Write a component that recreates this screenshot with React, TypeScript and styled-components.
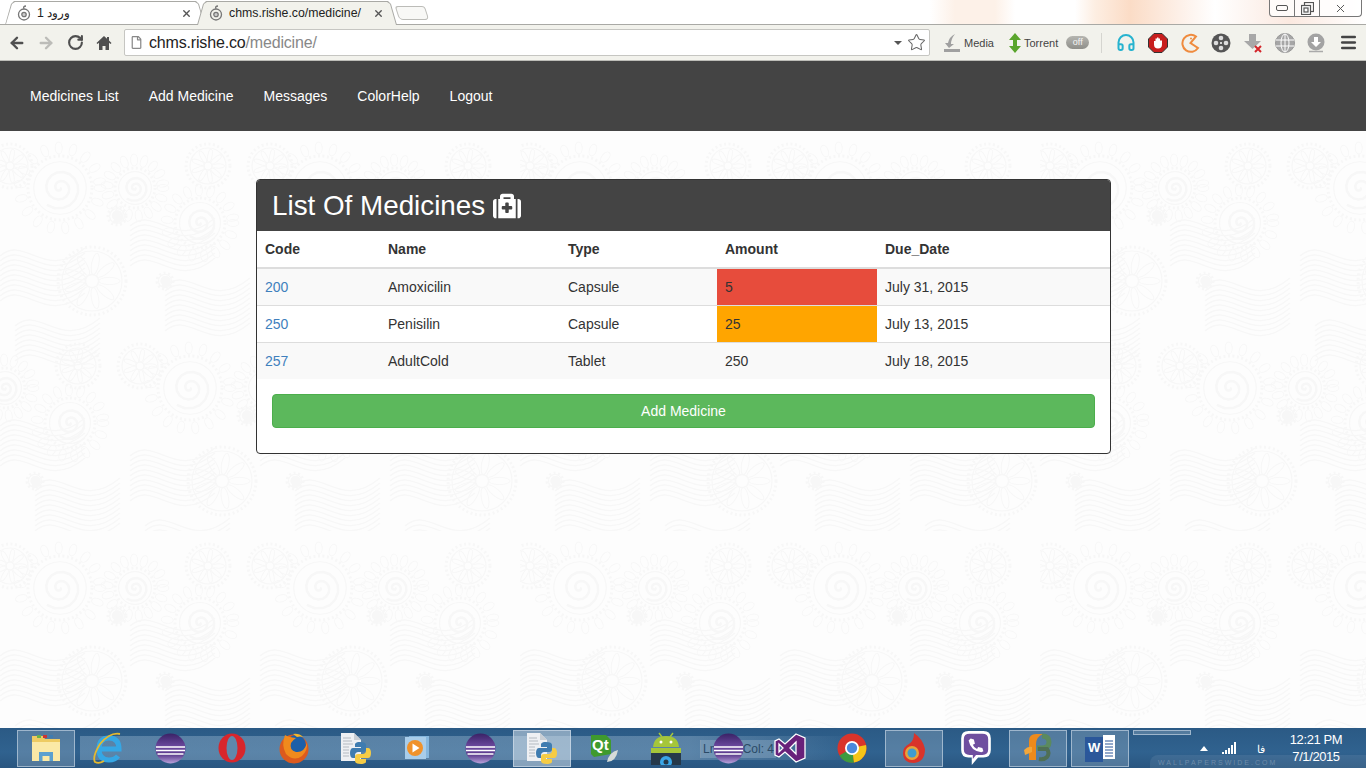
import React from 'react';
import styled, { createGlobalStyle, css } from 'styled-components';
import { FaMedkit, FaRegFile } from 'react-icons/fa';
import { ArrowLeft, ArrowRight, RotateCw, Star, X, Menu, Headphones } from 'lucide-react';

// paisley wallpaper, one half of the tile is repeated with an offset
const buildPattern = () => {
    const W = 520;
    const H = 400;
    const petalRing = (x: number, y: number, r: number, len: number, width: number, step: number) => {
        let out = '';
        for (let a = 0; a < 6.28; a += step) {
            const px = (x + Math.cos(a) * (r + len)).toFixed(1);
            const py = (y + Math.sin(a) * (r + len)).toFixed(1);
            out += `<ellipse cx="${px}" cy="${py}" rx="${width}" ry="${len}" transform="rotate(${((a * 180) / 3.14 + 90).toFixed(0)} ${px} ${py})"/>`;
        }
        return out;
    };
    const spiral = (x: number, y: number, r: number, petals = true) => {
        let d = `M${x} ${y}`;
        for (let a = 0; a < 15; a += 0.4) {
            const k = (a / 15) * r * 0.68;
            d += `L${(x + Math.cos(a) * k).toFixed(1)} ${(y + Math.sin(a) * k).toFixed(1)}`;
        }
        return `<path d="${d}" stroke-width="2.500"/><circle cx="${x}" cy="${y}" r="${r * 0.82}" stroke-width="1.200"/><circle cx="${x}" cy="${y}" r="${r}" stroke-width="3" stroke-dasharray="2 2.500"/>${petals ? petalRing(x, y, r + 2, 6, 3.500, 0.36) : ''}`;
    };
    const flower = (x: number, y: number, r: number) =>
        `<circle cx="${x}" cy="${y}" r="${r * 0.22}" stroke-width="1.500"/>${petalRing(x, y, r * 0.22, r * 0.36, r * 0.12, 0.7)}<circle cx="${x}" cy="${y}" r="${r}" stroke-width="1.200"/><circle cx="${x}" cy="${y}" r="${r + 4}" stroke-width="3" stroke-dasharray="2 2.500"/>`;
    const waves = (x: number, y: number, n: number) => {
        let out = '';
        for (let i = 0; i < n; i++) {
            out += `<path d="M${x} ${y + i * 5}c25 -22 45 26 85 -8" stroke-width="1.300"/>`;
        }
        return out;
    };
    const group = [
        spiral(60, 62, 32),
        spiral(135, 62, 20),
        spiral(200, 97, 25),
        flower(208, 40, 18),
        flower(10, 40, 18),
        flower(92, 155, 30),
        spiral(117, 90, 9, false),
        spiral(165, 155, 8, false),
        waves(130, 100, 9),
        waves(165, 160, 10),
        waves(0, 130, 10),
        waves(15, 200, 8),
    ].join('');
    const copies = [[0, 0], [260, 0], [-130, 200], [130, 200], [390, 200], [0, 400], [260, 400]];
    const body = copies.map(([dx, dy]) => `<g transform="translate(${dx} ${dy - 5})">${group}</g>`).join('');
    const svg = `<svg xmlns="http://www.w3.org/2000/svg" width="${W}" height="${H}"><g fill="none" stroke="#f7f7f7">${body}</g></svg>`;
    return `data:image/svg+xml,${encodeURIComponent(svg)}`;
};

const patternUrl = buildPattern();

const GlobalStyle = createGlobalStyle`
  html, body { margin: 0; padding: 0; height: 100%; overflow: hidden; }
  body { font-family: "Liberation Sans", Arial, sans-serif; font-size: 14px; color: #333; }
  #root { height: 100%; }
  * { box-sizing: border-box; }
`;

const Screen = styled.div`
  display: flex;
  flex-direction: column;
  width: 1366px;
  height: 768px;
  overflow: hidden;
`;

const TabStrip = styled.div`
  display: flex;
  align-items: flex-end;
  height: 25px;
  padding-left: 13px;
  gap: 11px;
  border-bottom: 1px solid #a9a9a5;
  background: linear-gradient(90deg, #fff 0, #fff 930px, #fdf1e8 955px, #fdf1e8 995px, #fff 1015px, #fff 1075px, #fdeee2 1095px, #fbdcc6 1130px, #fdf0e8 1180px, #fff 1215px, #fbe9e0 1290px, #fff 1366px);
`;

const Tab = styled.div<{ $active?: boolean }>`
  position: relative;
  display: flex;
  align-items: center;
  width: 181px;
  height: 24px;
  margin-bottom: -1px;
  padding: 0 2px 0 4px;
  font-size: 12.3px;
  color: #222;
  z-index: ${p => (p.$active ? 2 : 1)};
  &::before {
    content: '';
    position: absolute;
    inset: 0 -11px 0 -8px;
    clip-path: polygon(0 100%, 6px 3px, 9px 0, calc(100% - 9px) 0, calc(100% - 6px) 3px, 100% 100%);
    background: #a9a9a5;
  }
  &::after {
    content: '';
    position: absolute;
    inset: 1px -10px ${p => (p.$active ? '0' : '1px')} -7px;
    clip-path: polygon(0 100%, 6px 2px, 9px 0, calc(100% - 9px) 0, calc(100% - 6px) 2px, 100% 100%);
    background: ${p => (p.$active ? '#f2f2ec' : '#fff')};
  }
  & > * { position: relative; z-index: 1; }
`;

const TabTitle = styled.span`
  flex: 1;
  margin-left: 6px;
  white-space: nowrap;
`;

const NewTab = styled.div`
  width: 30px;
  height: 14px;
  margin: 0 0 4px 0;
  border: 1px solid #bcbcb8;
  border-radius: 3px 3px 4px 4px;
  background: #f8f8f6;
  transform: skewX(18deg);
  position: relative;
  z-index: 3;
`;

const WindowButtons = styled.div`
  position: absolute;
  top: 0;
  left: 1269px;
  display: flex;
  width: 93px;
  height: 17px;
  border: 1px solid #777;
  border-top: 0;
  border-radius: 0 0 4px 4px;
  background: rgba(255, 255, 255, 0.8);
`;

const WindowButton = styled.div<{ $width: number; $last?: boolean }>`
  display: flex;
  align-items: center;
  justify-content: center;
  width: ${p => p.$width}px;
  color: #555;
  border-right: ${p => (p.$last ? '0' : '1px solid #777')};
`;

const Toolbar = styled.div`
  display: flex;
  align-items: center;
  height: 36px;
  padding-left: 8px;
  background: #f2f2ec;
  border-bottom: 1px solid #bdbdb8;
`;

const NavButton = styled.div<{ $color?: string }>`
  display: flex;
  align-items: center;
  justify-content: center;
  flex: none;
  width: 18px;
  height: 18px;
  margin-right: 11px;
  color: ${p => p.$color || '#4f4f4f'};
`;

const Omnibox = styled.div`
  display: flex;
  align-items: center;
  flex: none;
  width: 806px;
  height: 27px;
  padding: 0 3px 0 5px;
  background: #fff;
  border: 1px solid #c6c6c2;
  border-radius: 2px;
  font-size: 16px;
  color: #222;
`;

const UrlRest = styled.span`
  color: #888;
`;

const UrlText = styled.div`
  flex: 1;
  margin-left: 6px;
  letter-spacing: -0.17px;
`;

const DropCaret = styled.span`
  width: 0;
  height: 0;
  margin-right: 5px;
  border: 4px solid transparent;
  border-top: 4px solid #555;
  border-bottom: 0;
`;

const Extensions = styled.div`
  display: flex;
  align-items: center;
  flex: 1;
  height: 100%;
  padding-left: 13px;
  font-size: 11px;
  color: #444;
`;

const ExtLabel = styled.span`
  display: flex;
  align-items: center;
  flex: none;
  gap: 3px;
  margin-right: 15px;
`;

const OffPill = styled.span`
  flex: none;
  width: 23px;
  height: 13px;
  margin-left: -7px;
  border-radius: 7px;
  background: linear-gradient(#b5b5b0, #8f8f8a);
  color: #f4f4f4;
  font-size: 9px;
  line-height: 12px;
  text-align: center;
`;

const ExtDivider = styled.span`
  flex: none;
  width: 1px;
  height: 20px;
  margin: 0 14px 0 12px;
  background: #d5d5d0;
`;

const ExtSlot = styled.span`
  display: flex;
  align-items: center;
  justify-content: center;
  flex: none;
  width: 20px;
  height: 20px;
  margin-right: 11.7px;
`;

const NavBar = styled.nav`
  display: flex;
  align-items: center;
  height: 70px;
  padding-left: 15px;
  background: #444;
`;

const NavLink = styled.a`
  padding: 0 15px;
  font-size: 14px;
  color: #fff;
  text-decoration: none;
`;

const Main = styled.main`
  flex: 1;
  padding-top: 48px;
  background-color: #fdfdfd;
  background-image: url("${patternUrl}");
`;

const Panel = styled.section`
  width: 855px;
  margin-left: 256px;
  padding-bottom: 25px;
  background: #fff;
  border: 1px solid #333;
  border-radius: 4px;
`;

const PanelHeader = styled.h3`
  display: flex;
  align-items: center;
  gap: 8px;
  height: 51px;
  margin: 0;
  padding-left: 15px;
  background: #444;
  border-radius: 3px 3px 0 0;
  color: #fff;
  font-size: 27.800px;
  font-weight: 400;
`;

const Table = styled.table`
  width: 853px;
  table-layout: fixed;
  border-collapse: collapse;
  border-spacing: 0;
`;

const HeadCell = styled.th`
  height: 37px;
  padding: 0 8px;
  text-align: left;
  font-size: 14px;
  font-weight: 700;
  border-bottom: 2px solid #ddd;
`;

const Row = styled.tr<{ $striped?: boolean }>`
  background: ${p => (p.$striped ? '#f9f9f9' : '#fff')};
`;

const Cell = styled.td<{ $fill?: string; $bordered?: boolean }>`
  height: 37px;
  padding: 0 8px;
  font-size: 14px;
  color: #333;
  ${p => p.$fill && css`background: ${p.$fill};`}
  ${p => p.$bordered && css`border-top: 1px solid #ddd;`}
`;

const CodeLink = styled.a`
  color: #3f80bd;
  text-decoration: none;
`;

const AddButton = styled.button`
  display: block;
  width: 823px;
  height: 34px;
  margin: 15px 0 0 15px;
  background: #5cb85c;
  border: 1px solid #4cae4c;
  border-radius: 4px;
  color: #fff;
  font-family: inherit;
  font-size: 14px;
`;

const Taskbar = styled.footer`
  position: relative;
  display: flex;
  align-items: center;
  height: 40px;
  padding-left: 15px;
  overflow: hidden;
  background:
    linear-gradient(90deg, transparent 0, transparent 80px, rgba(150, 180, 205, 0.42) 80px, rgba(150, 180, 205, 0.42) 690px, rgba(150, 180, 205, 0.2) 780px, transparent 860px) 0 8px / 100% 24px no-repeat,
    linear-gradient(#2b5a85, #30628f 60%, #2a5680);
`;

const Slot = styled.div<{ $state?: 'running' | 'active' | 'partial' }>`
  position: relative;
  display: flex;
  align-items: center;
  justify-content: center;
  flex: none;
  width: 62px;
  height: 40px;
  &::before {
    content: '';
    display: ${p => (p.$state ? 'block' : 'none')};
    position: absolute;
    left: 2px;
    right: 2px;
    top: 2px;
    bottom: ${p => (p.$state === 'partial' ? '33px' : '1px')};
    border: 1px solid rgba(220, 232, 242, 0.55);
    background: ${p => (p.$state === 'active' ? 'rgba(225, 235, 243, 0.5)' : 'rgba(200, 215, 228, 0.25)')};
  }
  & > svg { position: relative; }
`;

const GhostText = styled.div`
  position: absolute;
  left: 700px;
  top: 12px;
  display: flex;
  justify-content: space-between;
  width: 76px;
  height: 18px;
  padding: 0 2px;
  border-left: 1px solid #7e99b1;
  font-size: 12px;
  line-height: 18px;
  color: #2b4a66;
  background: rgba(200, 215, 228, 0.25);
  white-space: nowrap;
`;

const Watermark = styled.span`
  position: absolute;
  left: 1150px;
  right: 0;
  bottom: 0;
  height: 13px;
  padding-left: 8px;
  border-radius: 8px 0 0 0;
  background: rgba(255, 255, 255, 0.08);
  color: rgba(255, 255, 255, 0.25);
  font-size: 7px;
  line-height: 15px;
  letter-spacing: 2px;
  white-space: nowrap;
`;

const Tray = styled.div`
  position: absolute;
  left: 1200px;
  top: 0;
  display: flex;
  align-items: center;
  height: 40px;
  color: #fff;
  font-size: 11px;
`;

const TraySignal = styled.svg`
  margin-left: 14px;
`;

const TrayLang = styled.span`
  margin: 0 0 0 21px;
  font-family: "Noto Sans", sans-serif;
  font-size: 11px;
`;

const Clock = styled.div`
  width: 60px;
  margin-left: 21px;
  font-size: 13px;
  letter-spacing: -0.4px;
  line-height: 17px;
  text-align: center;
`;

const Favicon = () => (
    <svg width="14" height="16" viewBox="0 0 14 16" fill="none" stroke="#777" strokeWidth="1.3">
        <circle cx="7" cy="9.5" r="5.5" />
        <circle cx="7" cy="9.5" r="2.2" fill="#ccc" />
        <path d="M7 4C6 2 7 1 9 1" />
    </svg>
);

const HomeIcon = () => (
    <svg width="16" height="16" viewBox="0 0 16 16" fill="#4f4f4f">
        <path d="M8 1 0.5 8l1 1L3 7.8V15h3.5v-4h3v4H13V7.8L14.5 9l1-1L13 5.6V2h-2v1.8z" />
    </svg>
);

const ExtIcons: React.ReactNode[] = [
    <Headphones key="h" size={21} color="#27b3cf" strokeWidth={2.4} />,
    <svg key="s" width="20" height="20" viewBox="0 0 20 20">
        <path d="M6 .5h8L19.500 6v8L14 19.500H6L.5 14V6z" fill="#c81e1e" stroke="#333" />
        <path d="M6 8h1.500V5.500H9V4.500h1.500v1H12v2h2v4q0 4-4 4t-4-4z" fill="#fff" />
    </svg>,
    <svg key="p" width="20" height="20" viewBox="0 0 20 20" fill="none" stroke="#ef8b3e" strokeWidth="2">
        <path d="M16 3.500A8.500 8.500 0 1 0 18 15L10.500 10z" />
        <circle cx="11" cy="5.500" r="1" fill="#ef8b3e" stroke="none" />
    </svg>,
    <svg key="f" width="20" height="20" viewBox="0 0 20 20">
        <circle cx="10" cy="10" r="9.500" fill="#555" />
        <g fill="#ddd">
            <circle cx="10" cy="5" r="2.300" /><circle cx="10" cy="15" r="2.300" />
            <circle cx="5" cy="10" r="2.300" /><circle cx="15" cy="10" r="2.300" />
        </g>
        <circle cx="10" cy="10" r="1" fill="#fff" />
    </svg>,
    <svg key="d" width="20" height="20" viewBox="0 0 20 20">
        <path d="M6 1h7v7h5l-8.500 8L1 8h5z" fill="#a8a8a8" />
        <path d="M12 13l6 6M18 13l-6 6" stroke="#d4252a" strokeWidth="2" />
    </svg>,
    <svg key="g" width="20" height="20" viewBox="0 0 20 20" fill="none" stroke="#fff" strokeWidth="1">
        <circle cx="10" cy="10" r="9.500" fill="#a6a6a6" stroke="#999" />
        <ellipse cx="10" cy="10" rx="4" ry="9" />
        <path d="M1 7h18M1 13h18M10 1v18" />
    </svg>,
    <svg key="o" width="20" height="20" viewBox="0 0 20 20">
        <circle cx="10" cy="9" r="8.500" fill="#a3a3a3" />
        <path d="M8 4h4v5h3l-5 5-5-5h3z" fill="#fff" />
        <path d="M3 18.500h14" stroke="#aaa" strokeWidth="1.500" />
    </svg>,
];

const PythonFile = () => (
    <svg width="32" height="31" viewBox="0 0 32 31">
        <path d="M1 0h13l7 7v21H1z" fill="#eef0f3" />
        <path d="M14 0v7h7z" fill="#c9ced4" />
        <path d="M3 5h8M3 8h9M3 11h10M3 14h6M3 17h6M3 20h6M3 23h6" stroke="#b4b9c2" strokeWidth="1.100" />
        <g transform="translate(10 9)">
            <path d="M10 0C5 0 5 2 5 3v2h6v1H3C1 6 0 8 0 11s1 5 3 5h2v-3c0-2 2-3 3-3h5c2 0 3-1 3-3V3c0-2-2-3-6-3z" fill="#3f7cb0" />
            <path d="M11 22c5 0 5-2 5-3v-2h-6v-1h8c2 0 3-2 3-5s-1-5-3-5h-2v3c0 2-2 3-3 3H8c-2 0-3 1-3 3v4c0 2 2 3 6 3z" fill="#f6cc45" />
        </g>
    </svg>
);

const Eclipse = ({ id }: { id: string }) => (
    <svg width="31" height="31" viewBox="0 0 31 31">
        <defs>
            <linearGradient id={id} x1="0" y1="0" x2="0" y2="1">
                <stop offset="0" stopColor="#3a2266" />
                <stop offset=".45" stopColor="#6d4aa0" />
                <stop offset=".7" stopColor="#5a3a8c" />
                <stop offset="1" stopColor="#b9a3dc" />
            </linearGradient>
        </defs>
        <circle cx="15.500" cy="15.500" r="15" fill={`url(#${id})`} />
        <path d="M1 14h29M1 17.500h29M2.500 21h26" stroke="#fff" strokeWidth="1.300" />
    </svg>
);

const TaskIcons: { icon: React.ReactNode; state?: 'running' | 'active' | 'partial' }[] = [
    {
        state: 'running',
        icon: (
            <svg width="32" height="32" viewBox="0 0 32 32">
                <path d="M2 4h11l2 3h15v22H2z" fill="#eecb62" />
                <path d="M2 10h28v19H2z" fill="#fbe9a6" />
                <path d="M9 20h14v9h-3.500v-5h-7v5H9z" fill="#5ba0cf" />
                <path d="M7 3h4v3H7z" fill="#6bb04a" />
                <path d="M13 3h4v3h-4z" fill="#c33" />
                <path d="M19 3h4v3h-4z" fill="#3f7cb0" />
            </svg>
        ),
    },
    {
        icon: (
            <svg width="31" height="34" viewBox="0 0 31 34" fill="none">
                <path d="M25 25q-3 4-9 4-10 0-10-11T16 7q10 0 10 11H8" stroke="#35a7e5" strokeWidth="5" />
                <path d="M27 3Q17 1 7 13-1 26 2 31q4 2 9-1" stroke="#e5b92f" strokeWidth="1.800" />
            </svg>
        ),
    },
    { icon: <Eclipse id="ec1" /> },
    {
        icon: (
            <svg width="28" height="30" viewBox="0 0 28 30">
                <ellipse cx="14" cy="15" rx="13.500" ry="14.500" fill="#d8262c" />
                <ellipse cx="14" cy="15" rx="5.500" ry="12" fill="#5f88ab" />
            </svg>
        ),
    },
    {
        icon: (
            <svg width="30" height="31" viewBox="0 0 30 31">
                <circle cx="15" cy="16" r="14.500" fill="#dc5a1e" />
                <circle cx="17" cy="12" r="10" fill="#1d5fa8" />
                <path d="M6 2q-4 10 1 19 8 8 16 2 6-6 5-13-3 10-11 9-7-2-5-9 2-3 5-5-8-1-11-3z" fill="#f08a1d" />
                <path d="M14 1q6-1 10 3-3-1-6 0z" fill="#f5b62a" />
            </svg>
        ),
    },
    { icon: <PythonFile /> },
    {
        icon: (
            <svg width="28" height="24" viewBox="0 0 28 24">
                <path d="M5 0h20v22H5z" fill="#86b7de" />
                <path d="M1 1h21v22H1z" fill="#a9cdea" />
                <circle cx="11" cy="12" r="8" fill="#f0922b" />
                <path d="M8.500 7.500l7 4.500-7 4.500z" fill="#fff" />
            </svg>
        ),
    },
    { icon: <Eclipse id="ec2" /> },
    { state: 'active', icon: <PythonFile /> },
    {
        icon: (
            <svg width="30" height="30" viewBox="0 0 30 30">
                <path d="M2 2h15l5 5v14l-17 3-3-3z" fill="#3f9a2e" />
                <text x="3" y="17" fontSize="15" fontWeight="700" fontFamily="Liberation Sans" fill="#fff">Qt</text>
                <path d="M29 17q-9 2-11 12 9 0 11-12z" fill="#d6dcd9" />
            </svg>
        ),
    },
    {
        icon: (
            <svg width="32" height="33" viewBox="0 0 32 33">
                <path d="M9 1l3 4M23 1l-3 4" stroke="#a5c63a" strokeWidth="1.500" />
                <path d="M3 15Q4 4 16 4t13 11z" fill="#a5c63a" />
                <circle cx="11" cy="10" r="1.500" fill="#fff" />
                <circle cx="21" cy="10" r="1.500" fill="#fff" />
                <path d="M1 16h30v5H1z" fill="#a5c63a" />
                <path d="M1 21h30v12H1z" fill="#26394a" />
                <circle cx="16" cy="30" r="6" fill="#3aa7e8" />
                <circle cx="16" cy="30" r="2.500" fill="#26394a" />
            </svg>
        ),
    },
    { icon: <Eclipse id="ec3" /> },
    {
        icon: (
            <svg width="32" height="30" viewBox="0 0 32 30">
                <path d="M22 1l9 4v20l-9 4-11-10-6 5-4-2V8l4-2 6 5zM22 9l-6 6 6 6zM5 11v8l4-4z" fill="#68217a" stroke="#fff" strokeWidth="1.300" />
            </svg>
        ),
    },
    {
        icon: (
            <svg width="30" height="30" viewBox="0 0 30 30">
                <circle cx="15" cy="15" r="14.500" fill="#d9342b" />
                <path d="M15 15L2.500 22.500A14.500 14.500 0 0 0 17 29.500z" fill="#3d9b3f" />
                <path d="M15 15l14-3a14.500 14.500 0 0 1-12 17.500z" fill="#f5c518" />
                <circle cx="15" cy="15" r="7" fill="#fff" />
                <circle cx="15" cy="15" r="5.200" fill="#4a89dc" />
            </svg>
        ),
    },
    {
        state: 'running',
        icon: (
            <svg width="26" height="32" viewBox="0 0 26 32">
                <path d="M13 1q9 6 11 16 0 13-11 14Q2 31 2 21q0-6 6-9 5-3 5-11z" fill="#d9342b" />
                <circle cx="11" cy="21" r="7" fill="#e8a33a" />
                <circle cx="11" cy="21" r="4.500" fill="#3f9ccf" />
            </svg>
        ),
    },
    {
        icon: (
            <svg width="32" height="36" viewBox="0 0 30 34">
                <path d="M8 1h14q7 0 7 7v11q0 7-7 7h-5l-6 7v-7H8q-7 0-7-7V8q0-7 7-7z" fill="#fff" />
                <path d="M9 3.500h12q5.500 0 5.500 5v10q0 5-5.500 5h-6l-3 4v-4H9q-5.500 0-5.500-5v-10q0-5 5.500-5z" fill="#6f4f9f" />
                <path d="M10 8l3 1 1 4-2 1q1 3 4 4l1-2 4 1 1 3-2 1q-10-1-12-11z" fill="#fff" />
            </svg>
        ),
    },
    {
        state: 'running',
        icon: (
            <svg width="32" height="32" viewBox="0 0 30 32" fill="none">
                <path d="M6 28V9q0-7 7-7h7q-7 3-7 10v16z" fill="#ee8a1c" />
                <path d="M19 4q7 0 7 6t-7 6h-5" stroke="#5b8a5f" strokeWidth="5" />
                <path d="M15 17h9q3 4 0 8-3 3-8 2" stroke="#4f6f55" strokeWidth="4" />
                <path d="M1 18q4-4 8-3v5l-7 3z" fill="#f3a63a" />
            </svg>
        ),
    },
    {
        state: 'running',
        icon: (
            <svg width="30" height="28" viewBox="0 0 30 28">
                <path d="M18 1h12v24H18z" fill="#fff" />
                <path d="M20 7h8M20 10h8M20 13h8M20 16h8M20 19h8M20 22h8" stroke="#2b579a" strokeWidth="1.200" />
                <path d="M0 3h18v25H0z" fill="#2b579a" />
                <text x="3" y="18" fontSize="13" fontWeight="700" fontFamily="Liberation Sans" fill="#fff">W</text>
            </svg>
        ),
    },
    {
        state: 'partial',
        icon: null,
    },
];

const medicines = [
    { code: '200', name: 'Amoxicilin', type: 'Capsule', amount: '5', due: 'July 31, 2015', fill: '#e74c3c' },
    { code: '250', name: 'Penisilin', type: 'Capsule', amount: '25', due: 'July 13, 2015', fill: '#ffa500' },
    { code: '257', name: 'AdultCold', type: 'Tablet', amount: '250', due: 'July 18, 2015' },
];

const App: React.FC = () => {
    return (
        <Screen>
            <GlobalStyle />
            <TabStrip>
                <Tab>
                    <Favicon />
                    <TabTitle>ورود 1</TabTitle>
                    <X size={11} strokeWidth={3} color="#555" />
                </Tab>
                <Tab $active>
                    <Favicon />
                    <TabTitle>chms.rishe.co/medicine/</TabTitle>
                    <X size={11} strokeWidth={3} color="#555" />
                </Tab>
                <NewTab />
                <WindowButtons>
                    <WindowButton $width={25}>
                        <svg width="12" height="6" fill="none" stroke="#555"><rect x=".5" y=".5" width="11" height="5" rx="1.500" /></svg>
                    </WindowButton>
                    <WindowButton $width={25}>
                        <svg width="13" height="13" fill="none" stroke="#555" strokeWidth="1.200"><rect x="3.500" y=".5" width="9" height="9" /><rect x=".5" y="3.500" width="9" height="9" fill="#fff" /><rect x="3" y="6" width="4" height="4" /></svg>
                    </WindowButton>
                    <WindowButton $width={41} $last>
                        <X size={13} strokeWidth={1.800} />
                    </WindowButton>
                </WindowButtons>
            </TabStrip>
            <Toolbar>
                <NavButton><ArrowLeft size={18} strokeWidth={3.200} /></NavButton>
                <NavButton $color="#bcbcb8"><ArrowRight size={18} strokeWidth={3.200} /></NavButton>
                <NavButton><RotateCw size={17} strokeWidth={3} /></NavButton>
                <NavButton><HomeIcon /></NavButton>
                <Omnibox>
                    <FaRegFile size={13} color="#888" />
                    <UrlText>chms.rishe.co<UrlRest>/medicine/</UrlRest></UrlText>
                    <DropCaret />
                    <Star size={19} strokeWidth={1.300} color="#666" />
                </Omnibox>
                <Extensions>
                    <ExtLabel>
                        <svg width="18" height="18" viewBox="0 0 18 18">
                            <path d="M12 0Q6 3 5 9H2l4 5 5-4H8q0-5 4-10zM1 15h16v3H1z" fill="#a0a0a0" />
                        </svg>
                        Media
                    </ExtLabel>
                    <ExtLabel>
                        <svg width="12" height="20" viewBox="0 0 12 20" fill="#5aa52c">
                            <path d="M6 0l6 7H8v6h4l-6 7-6-7h4V7H0z" />
                        </svg>
                        Torrent
                    </ExtLabel>
                    <OffPill>off</OffPill>
                    <ExtDivider />
                    {ExtIcons.map((icon, i) => (
                        <ExtSlot key={i}>{icon}</ExtSlot>
                    ))}
                    <ExtSlot><Menu size={19} strokeWidth={3} color="#444" /></ExtSlot>
                </Extensions>
            </Toolbar>
            <NavBar>
                <NavLink>Medicines List</NavLink>
                <NavLink>Add Medicine</NavLink>
                <NavLink>Messages</NavLink>
                <NavLink>ColorHelp</NavLink>
                <NavLink>Logout</NavLink>
            </NavBar>
            <Main>
                <Panel>
                    <PanelHeader>List Of Medicines <FaMedkit size={28} /></PanelHeader>
                    <Table>
                        <colgroup>
                            <col width={123} />
                            <col width={180} />
                            <col width={157} />
                            <col width={160} />
                            <col width={233} />
                        </colgroup>
                        <thead>
                            <tr>
                                <HeadCell>Code</HeadCell>
                                <HeadCell>Name</HeadCell>
                                <HeadCell>Type</HeadCell>
                                <HeadCell>Amount</HeadCell>
                                <HeadCell>Due_Date</HeadCell>
                            </tr>
                        </thead>
                        <tbody>
                            {medicines.map((m, i) => (
                                <Row key={m.code} $striped={i % 2 === 0}>
                                    <Cell $bordered={i > 0}><CodeLink>{m.code}</CodeLink></Cell>
                                    <Cell $bordered={i > 0}>{m.name}</Cell>
                                    <Cell $bordered={i > 0}>{m.type}</Cell>
                                    <Cell $bordered={i > 0} $fill={m.fill}>{m.amount}</Cell>
                                    <Cell $bordered={i > 0}>{m.due}</Cell>
                                </Row>
                            ))}
                        </tbody>
                    </Table>
                    <AddButton>Add Medicine</AddButton>
                </Panel>
            </Main>
            <Taskbar>
                <GhostText><span>Ln</span><span>Col: 4</span></GhostText>
                {TaskIcons.map((t, i) => (
                    <Slot key={i} $state={t.state}>{t.icon}</Slot>
                ))}
                <Watermark>WALLPAPERSWIDE.COM</Watermark>
                <Tray>
                    <svg width="8" height="5" viewBox="0 0 8 5" fill="#fff"><path d="M4 0l4 5H0z" /></svg>
                    <TraySignal width="14" height="12" viewBox="0 0 14 12" fill="#fff">
                        <path d="M0 10h2v2H0zM3 8h2v4H3zM6 6h2v6H6zM9 3h2v9H9zM12 0h2v12h-2z" />
                    </TraySignal>
                    <TrayLang>فا</TrayLang>
                    <Clock>12:21 PM<br />7/1/2015</Clock>
                </Tray>
            </Taskbar>
        </Screen>
    );
};

export default App;
